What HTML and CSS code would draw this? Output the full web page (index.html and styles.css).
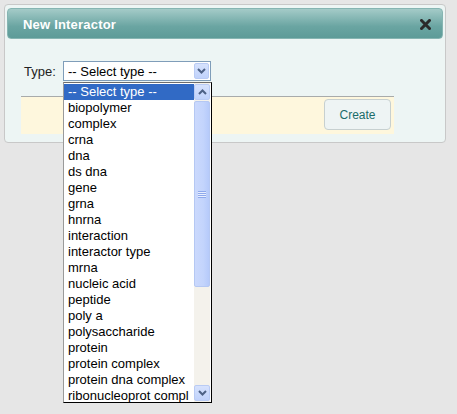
FILE: index.html
```html
<!DOCTYPE html>
<html>
<head>
<meta charset="utf-8">
<link rel="stylesheet" href="styles.css">
</head>
<body>
<div class="dialog">
  <div class="titlebar">
    <span class="title">New Interactor</span>
    <svg class="close" width="11" height="11" viewBox="0 0 11 11"><path d="M1.5 1.5 L9.5 9.5 M9.5 1.5 L1.5 9.5" stroke="#2b2b2b" stroke-width="3" stroke-linecap="square"/></svg>
  </div>
  <div class="body">
    <div class="row">
      <label class="label">Type:</label>
      <div class="select">
        <span class="select-text">-- Select type --</span>
        <span class="btn-arrow"><svg width="9" height="6" viewBox="0 0 9 6"><path d="M1 1 L4.5 4.5 L8 1" fill="none" stroke="#4d6185" stroke-width="2"/></svg></span>
      </div>
    </div>
    <div class="actions">
      <button class="create">Create</button>
    </div>
  </div>
</div>
<div class="listbox">
  <ul class="options">
    <li class="selected">-- Select type --</li>
    <li>biopolymer</li>
    <li>complex</li>
    <li>crna</li>
    <li>dna</li>
    <li>ds dna</li>
    <li>gene</li>
    <li>grna</li>
    <li>hnrna</li>
    <li>interaction</li>
    <li>interactor type</li>
    <li>mrna</li>
    <li>nucleic acid</li>
    <li>peptide</li>
    <li>poly a</li>
    <li>polysaccharide</li>
    <li>protein</li>
    <li>protein complex</li>
    <li>protein dna complex</li>
    <li>ribonucleoprot compl</li>
  </ul>
  <div class="scrollbar">
    <div class="sb-btn"><svg width="9" height="6" viewBox="0 0 9 6"><path d="M1 5 L4.5 1.5 L8 5" fill="none" stroke="#4d6185" stroke-width="2"/></svg></div>
    <div class="sb-track">
      <div class="sb-thumb"><span class="grip"></span></div>
    </div>
    <div class="sb-btn"><svg width="9" height="6" viewBox="0 0 9 6"><path d="M1 1 L4.5 4.5 L8 1" fill="none" stroke="#4d6185" stroke-width="2"/></svg></div>
  </div>
</div>
</body>
</html>
```

FILE: styles.css
```css
html, body {
  margin: 0;
  padding: 0;
}
body {
  background: #e6e6e6;
  font-family: "Liberation Sans", Arial, sans-serif;
  width: 457px;
  height: 414px;
  overflow: hidden;
  position: relative;
}
.dialog {
  margin: 4px 0 0 4px;
  width: 440px;
  height: 134px;
  padding: 3px 0 0 0;
  border: 1px solid #c8c8c8;
  border-radius: 4px;
  background: #edf5f4;
}
.titlebar {
  margin: 0 2px;
  height: 29px;
  border: 1px solid #86b5b2;
  border-radius: 4px;
  background: linear-gradient(#a4cbc8, #6aa5a2 60%, #5d9b98);
  display: flex;
  align-items: center;
  justify-content: space-between;
  padding: 0 11px 0 15px;
}
.title {
  color: #fff;
  font-weight: bold;
  font-size: 13px;
  letter-spacing: 0.2px;
  margin-top: 1px;
}
.close {
  display: block;
  margin-top: 1px;
}
.body {
  padding: 0 51px 0 16px;
}
.row {
  display: flex;
  align-items: center;
  margin-top: 22px;
  padding-left: 3px;
  height: 20px;
}
.label {
  font-size: 13px;
  color: #222;
  width: 39px;
}
.select {
  width: 146px;
  height: 18px;
  border: 1px solid #7f9db9;
  background: #fff;
  display: flex;
  align-items: center;
  justify-content: space-between;
}
.select-text {
  font-size: 13px;
  color: #000;
  padding-left: 4px;
}
.btn-arrow {
  width: 15px;
  height: 16px;
  margin-right: 1px;
  border: 1px solid #b9cbf4;
  border-radius: 2px;
  box-sizing: border-box;
  background: linear-gradient(#d6e2fd, #c0d2fb);
  display: flex;
  align-items: center;
  justify-content: center;
}
.actions {
  margin-top: 15px;
  height: 35px;
  border-top: 1px solid #a8abab;
  background: #fef7dd;
  display: flex;
  justify-content: flex-end;
  align-items: flex-start;
  padding: 2px 3px 0 0;
}
.create {
  width: 67px;
  height: 31px;
  border: 1px solid #c7d0d0;
  border-radius: 4px;
  background: #eef4f4;
  color: #1b6c6a;
  font-family: "Liberation Sans", Arial, sans-serif;
  font-size: 12px;
  padding: 0;
}
.listbox {
  position: absolute;
  left: 63px;
  top: 82px;
  width: 147px;
  height: 319px;
  border: 1px solid #000;
  border-left-color: #9a9a9a;
  border-top-color: #6d6d6d;
  background: #fff;
  display: flex;
}
.options {
  list-style: none;
  margin: 1px 0 0 0;
  padding: 0;
  flex: 1;
}
.options li {
  height: 16px;
  line-height: 16px;
  font-size: 13px;
  color: #000;
  padding-left: 4px;
  white-space: nowrap;
  overflow: hidden;
}
.options li.selected {
  background: #316ac5;
  color: #fff;
}
.scrollbar {
  width: 16px;
  margin-right: 1px;
  background: #f4f2ec;
  display: flex;
  flex-direction: column;
}
.sb-btn {
  height: 16px;
  margin: 1px 0;
  border: 1px solid #b9cbf4;
  border-radius: 2px;
  box-sizing: border-box;
  background: linear-gradient(#d6e2fd, #c0d2fb);
  display: flex;
  align-items: center;
  justify-content: center;
}
.sb-track {
  flex: 1;
}
.sb-thumb {
  height: 186px;
  border: 1px solid #b5c8f3;
  border-radius: 2px;
  box-sizing: border-box;
  background: linear-gradient(90deg, #cbd9fd, #c3d4fc 60%, #b6cafa);
  display: flex;
  align-items: center;
  justify-content: center;
}
.grip {
  width: 8px;
  height: 7px;
  background: repeating-linear-gradient(#8fa9ec 0 1px, #e8efff 1px 2px);
}
```
